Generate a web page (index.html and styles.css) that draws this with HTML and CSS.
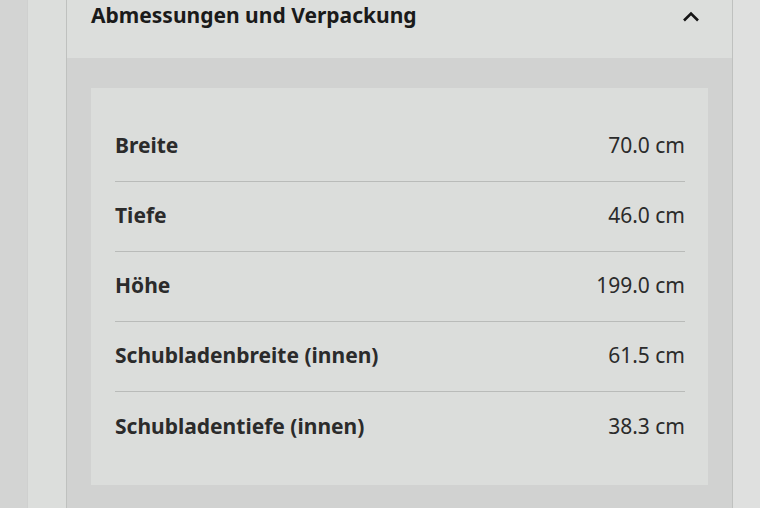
FILE: index.html
```html
<!DOCTYPE html>
<html lang="de">
<head>
<meta charset="utf-8">
<link rel="stylesheet" href="styles.css">
</head>
<body>
<div class="page">
  <div class="gutter"></div>
  <div class="side"></div>
  <section class="card">
    <header class="card-head">
      <h2 class="card-title">Abmessungen und Verpackung</h2>
      <svg class="chevron" width="18" height="12" viewBox="0 0 18 12"><path d="M2 10.5 L9 3.5 L16 10.5" fill="none" stroke="#151515" stroke-width="2.6"/></svg>
    </header>
    <div class="card-body">
      <dl class="dims">
        <div class="row"><dt>Breite</dt><dd>70.0 cm</dd></div>
        <div class="row"><dt>Tiefe</dt><dd>46.0 cm</dd></div>
        <div class="row"><dt>Höhe</dt><dd>199.0 cm</dd></div>
        <div class="row"><dt>Schubladenbreite (innen)</dt><dd>61.5 cm</dd></div>
        <div class="row"><dt>Schubladentiefe (innen)</dt><dd>38.3 cm</dd></div>
      </dl>
    </div>
  </section>
  <div class="side right"></div>
</div>
</body>
</html>
```
FILE: styles.css
```css
* { box-sizing: border-box; }
html, body { margin: 0; padding: 0; }
body {
  background: #d3d4d3;
  font-family: "Noto Sans", "Open Sans", sans-serif;
  width: 760px;
  height: 508px;
  overflow: hidden;
}
.page {
  display: flex;
  height: 508px;
}
.gutter {
  width: 28px;
  flex: none;
  background: #d3d4d3;
  border-right: 1px solid #cfd0cf;
}
.side {
  width: 38px;
  flex: none;
  background: #dcdedc;
}
.side.right {
  width: 27px;
  background: #dfe0df;
}
.card {
  width: 667px;
  flex: none;
  border-left: 1px solid #bfc1bf;
  border-right: 1px solid #bfc1bf;
  display: flex;
  flex-direction: column;
}
.card-head {
  height: 58px;
  flex: none;
  background: #dcdedc;
  display: flex;
  align-items: center;
  justify-content: space-between;
  padding: 0 32px 28px 24px;
}
.card-title {
  margin: 0;
  font-size: 21px;
  font-weight: 700;
  color: #1a1a1a;
}
.chevron { display: block; margin-top: 1px; }
.card-body {
  flex: 1;
  background: #d1d2d1;
  padding: 30px 24px 0 24px;
}
.dims {
  margin: 0;
  background: #dbdddb;
  padding: 24px 23px 0 24px;
  height: 397px;
}
.row {
  display: flex;
  justify-content: space-between;
  align-items: center;
  height: 70px;
  padding-bottom: 3px;
  border-bottom: 1px solid #b9bbb9;
}
.row:last-child { border-bottom: none; height: 69px; padding-bottom: 2px; }
.row dt {
  font-size: 21px;
  font-weight: 700;
  color: #2b2b2b;
}
.row dd {
  margin: 0;
  font-size: 21px;
  color: #2b2b2b;
}
```
